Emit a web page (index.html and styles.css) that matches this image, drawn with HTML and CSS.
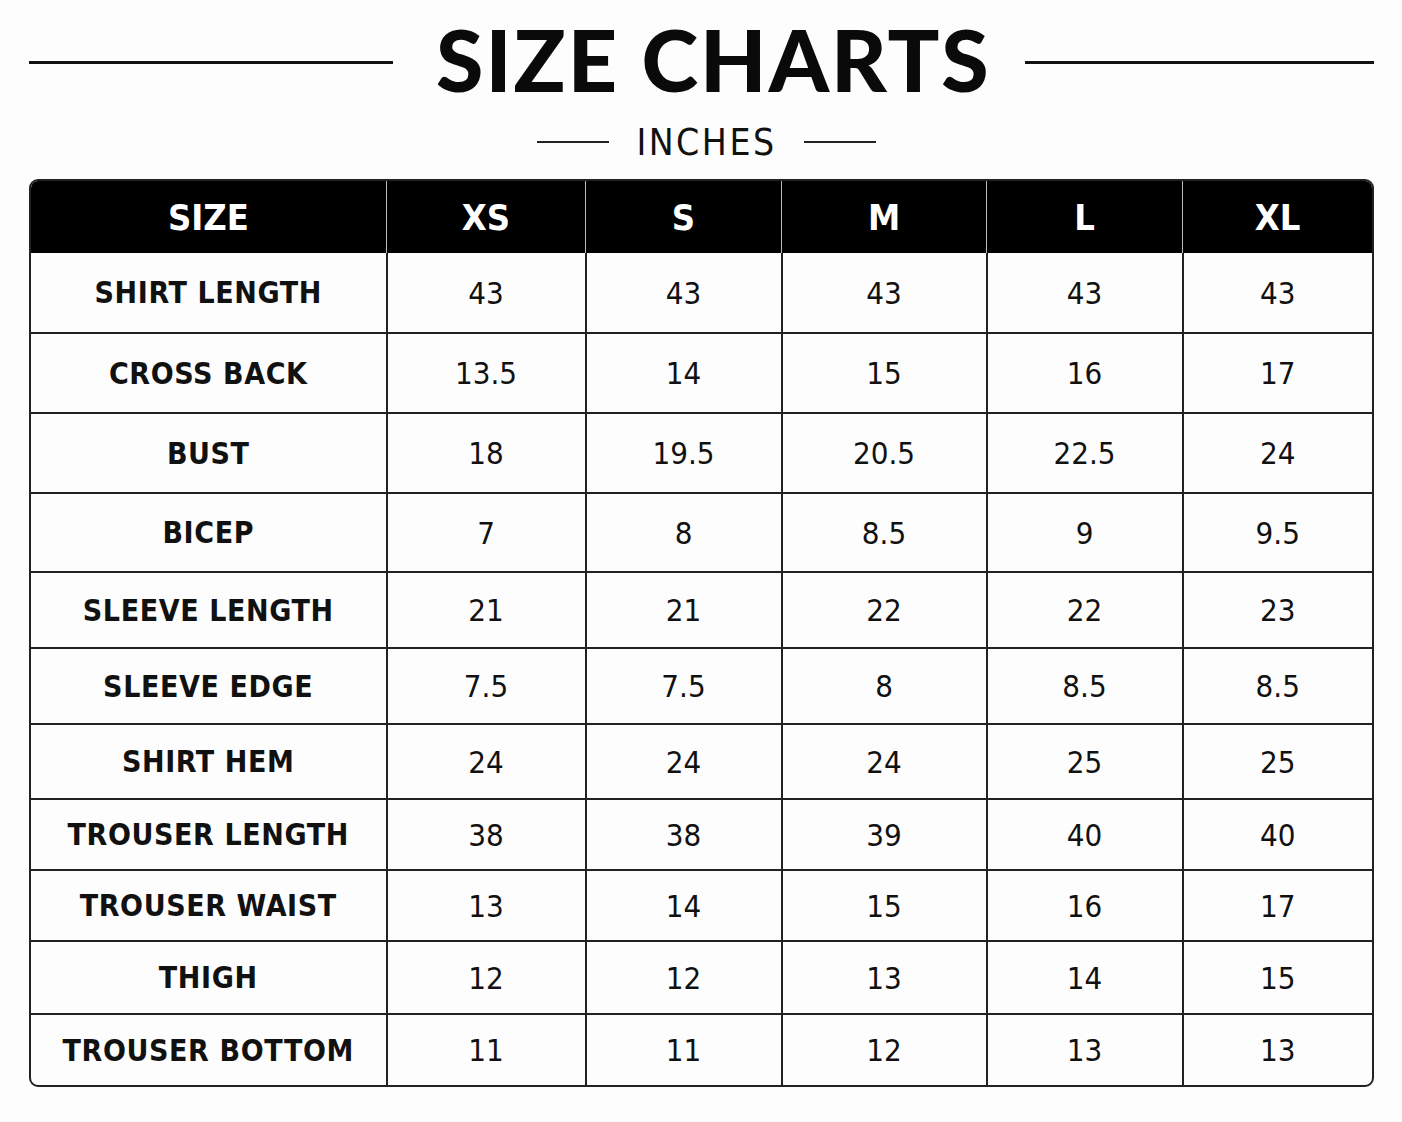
FILE: index.html
```html
<!DOCTYPE html>
<html lang="en">
<head>
    <meta charset="UTF-8">
    <title>Size Charts</title>
    <link rel="stylesheet" href="styles.css">
</head>
<body>

<div class="page">
    <!-- Judul -->
    <div class="title-row">
        <div class="rule rule-left"></div>
        <h1>SIZE CHARTS</h1>
        <div class="rule"></div>
    </div>

    <div class="unit-row">
        <div class="rule-thin"></div>
        <span>INCHES</span>
        <div class="rule-thin"></div>
    </div>

    <!-- Tabel ukuran -->
    <div class="chart">
        <table>
            <thead>
                <tr>
                    <th>SIZE</th><th>XS</th><th>S</th><th>M</th><th>L</th><th>XL</th>
                </tr>
            </thead>
            <tbody>
                <tr><td>SHIRT LENGTH</td><td>43</td><td>43</td><td>43</td><td>43</td><td>43</td></tr>
                <tr><td>CROSS BACK</td><td>13.5</td><td>14</td><td>15</td><td>16</td><td>17</td></tr>
                <tr><td>BUST</td><td>18</td><td>19.5</td><td>20.5</td><td>22.5</td><td>24</td></tr>
                <tr><td>BICEP</td><td>7</td><td>8</td><td>8.5</td><td>9</td><td>9.5</td></tr>
                <tr><td>SLEEVE LENGTH</td><td>21</td><td>21</td><td>22</td><td>22</td><td>23</td></tr>
                <tr><td>SLEEVE EDGE</td><td>7.5</td><td>7.5</td><td>8</td><td>8.5</td><td>8.5</td></tr>
                <tr><td>SHIRT HEM</td><td>24</td><td>24</td><td>24</td><td>25</td><td>25</td></tr>
                <tr><td>TROUSER LENGTH</td><td>38</td><td>38</td><td>39</td><td>40</td><td>40</td></tr>
                <tr><td>TROUSER WAIST</td><td>13</td><td>14</td><td>15</td><td>16</td><td>17</td></tr>
                <tr><td>THIGH</td><td>12</td><td>12</td><td>13</td><td>14</td><td>15</td></tr>
                <tr><td>TROUSER BOTTOM</td><td>11</td><td>11</td><td>12</td><td>13</td><td>13</td></tr>
            </tbody>
        </table>
    </div>
</div>

</body>
</html>
```

FILE: styles.css
```css
/* Global */
body {
    margin: 0;
    background: #fdfdfd;
    color: #111;
    font-family: "DejaVu Sans", sans-serif;
}

.page {
    padding: 16px 28px 0 29px;
}

/* Judul */
.title-row {
    display: flex;
    align-items: center;
    gap: 34px;
    height: 80px;
    margin-top: 3px;
}

.rule {
    flex: 1;
    height: 3px;
    background: #111;
    margin-top: 6px;
}

.rule-left {
    flex: 0 0 364px;
}

h1 {
    margin: 0 0 0 9px;
    font-family: "Lato", sans-serif;
    font-weight: 900;
    font-size: 86px;
    letter-spacing: 2px;
    line-height: 80px;
    color: #0a0a0a;
}

.unit-row {
    display: flex;
    justify-content: center;
    align-items: center;
    gap: 27px;
    height: 44px;
    margin: 21px 0 0 10px;
}

.rule-thin {
    width: 72px;
    height: 2px;
    background: #222;
}

.unit-row span {
    font-family: "DejaVu Sans Condensed", "DejaVu Sans", sans-serif;
    font-stretch: condensed;
    font-size: 37px;
    font-weight: 300;
    letter-spacing: 2.5px;
}

/* Tabel */
.chart {
    margin-top: 15px;
    border: 2px solid #222;
    border-radius: 9px;
    overflow: hidden;
    width: 1341px;
}

table {
    width: 100%;
    border-collapse: collapse;
    table-layout: fixed;
}

th, td {
    text-align: center;
    padding: 0;
    font-family: "DejaVu Sans Condensed", "DejaVu Sans", sans-serif;
    font-stretch: condensed;
}

th {
    background: #000;
    color: #fff;
    height: 72px;
    font-size: 36px;
    font-weight: 700;
    border-left: 1px solid #bbb;
}

th:first-child {
    width: 355px;
    border-left: none;
}

th:nth-child(2) { width: 198px; }
th:nth-child(3) { width: 195px; }
th:nth-child(4) { width: 204px; }
th:nth-child(5) { width: 195px; }

td {
    border: 2px solid #222;
    font-size: 31px;
    font-weight: 400;
}

td:first-child {
    border-left: none;
    font-size: 30px;
    font-weight: 700;
    letter-spacing: 0.6px;
}

td:last-child {
    border-right: none;
}

tbody tr:first-child td {
    border-top: none;
}

tbody tr:last-child td {
    border-bottom: none;
}

/* Tinggi baris */
tbody tr { height: 80px; }
tbody tr:nth-child(4) { height: 79px; }
tbody tr:nth-child(n+5) { height: 76px; }
tbody tr:nth-child(7) { height: 75px; }
tbody tr:nth-child(n+8) { height: 71px; }
tbody tr:nth-child(10) { height: 73px; }
```
